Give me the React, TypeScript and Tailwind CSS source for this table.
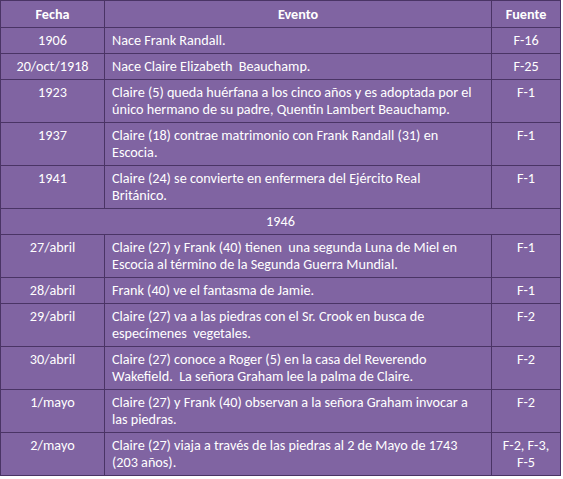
import React from 'react';

type Row = {
  fecha: string;
  evento: string[];
  fuente: string[];
};

const rows: Row[] = [
  { fecha: '1906', evento: ['Nace Frank Randall.'], fuente: ['F-16'] },
  { fecha: '20/oct/1918', evento: ['Nace Claire Elizabeth  Beauchamp.'], fuente: ['F-25'] },
  {
    fecha: '1923',
    evento: [
      'Claire (5) queda huérfana a los cinco años y es adoptada por el',
      'único hermano de su padre, Quentin Lambert Beauchamp.',
    ],
    fuente: ['F-1'],
  },
  {
    fecha: '1937',
    evento: ['Claire (18) contrae matrimonio con Frank Randall (31) en', 'Escocia.'],
    fuente: ['F-1'],
  },
  {
    fecha: '1941',
    evento: ['Claire (24) se convierte en enfermera del Ejército Real', 'Británico.'],
    fuente: ['F-1'],
  },
];

const rows1946: Row[] = [
  {
    fecha: '27/abril',
    evento: [
      'Claire (27) y Frank (40) tienen  una segunda Luna de Miel en',
      'Escocia al término de la Segunda Guerra Mundial.',
    ],
    fuente: ['F-1'],
  },
  { fecha: '28/abril', evento: ['Frank (40) ve el fantasma de Jamie.'], fuente: ['F-1'] },
  {
    fecha: '29/abril',
    evento: ['Claire (27) va a las piedras con el Sr. Crook en busca de', 'especímenes  vegetales.'],
    fuente: ['F-2'],
  },
  {
    fecha: '30/abril',
    evento: [
      'Claire (27) conoce a Roger (5) en la casa del Reverendo',
      'Wakefield.  La señora Graham lee la palma de Claire.',
    ],
    fuente: ['F-2'],
  },
  {
    fecha: '1/mayo',
    evento: ['Claire (27) y Frank (40) observan a la señora Graham invocar a', 'las piedras.'],
    fuente: ['F-2'],
  },
  {
    fecha: '2/mayo',
    evento: ['Claire (27) viaja a través de las piedras al 2 de Mayo de 1743', '(203 años).'],
    fuente: ['F-2, F-3,', 'F-5'],
  },
];

const cell = 'border border-[#4a3465] px-[7px] pt-[4px] pb-[4px] align-top leading-[17px]';

const Lines = ({ lines }: { lines: string[] }) => (
  <>
    {lines.map((l, i) => (
      <span key={i} className="block whitespace-pre">
        {l}
      </span>
    ))}
  </>
);

const EventRow = ({ row }: { row: Row }) => (
  <tr>
    <td className={`${cell} text-center`}>{row.fecha}</td>
    <td className={cell}>
      <Lines lines={row.evento} />
    </td>
    <td className={`${cell} text-center`}>
      <Lines lines={row.fuente} />
    </td>
  </tr>
);

export default function App() {
  return (
    <div className="bg-white min-h-screen">
      <table
        className="border-collapse bg-[#8064a2] text-white text-[14.2px] w-[560px] table-fixed"
        style={{ fontFamily: 'Carlito, Lato, "Open Sans", sans-serif' }}
      >
        <colgroup>
          <col className="w-[104px]" />
          <col className="w-[387px]" />
          <col className="w-[69px]" />
        </colgroup>
        <thead>
          <tr>
            <th className={`${cell} pt-[5px] font-bold text-center`}>Fecha</th>
            <th className={`${cell} pt-[5px] font-bold text-center`}>Evento</th>
            <th className={`${cell} pt-[5px] font-bold text-center`}>Fuente</th>
          </tr>
        </thead>
        <tbody>
          {rows.map((r) => (
            <EventRow key={r.fecha} row={r} />
          ))}
          <tr>
            <td colSpan={3} className={`${cell} text-center`}>
              1946
            </td>
          </tr>
          {rows1946.map((r) => (
            <EventRow key={r.fecha} row={r} />
          ))}
        </tbody>
      </table>
    </div>
  );
}
